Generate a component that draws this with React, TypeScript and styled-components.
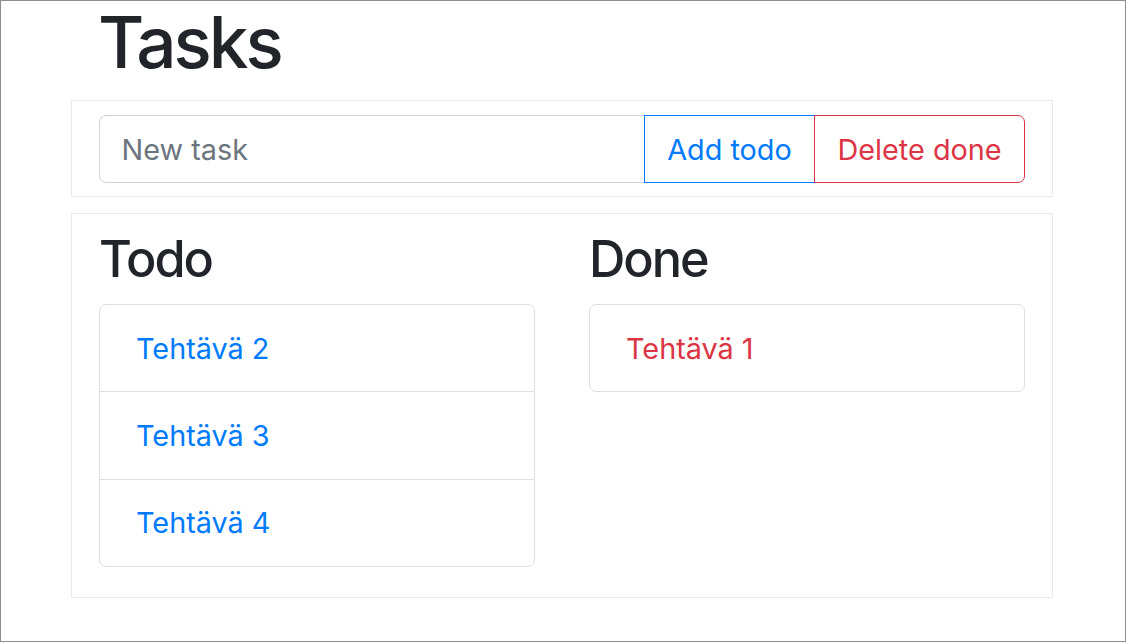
import React from "react";
import styled, { createGlobalStyle } from "styled-components";

const GlobalStyle = createGlobalStyle`
  *, *::before, *::after { box-sizing: border-box; }
  html, body { margin: 0; padding: 0; background: #ffffff; }
  body {
    font-family: Inter, "Noto Sans", "Liberation Sans", sans-serif;
    color: #212529;
  }
`;

const Frame = styled.div`
  width: 1126px;
  height: 642px;
  padding-right: 2px;
  border: 1px solid #8e8e8e;
  overflow: hidden;
`;

const Container = styled.div`
  width: 982px;
  margin: 0 auto;
  display: flex;
  flex-direction: column;
`;

const Title = styled.h1`
  margin: 2px 0 19px;
  padding: 0 27px;
  font-size: 71px;
  font-weight: 500;
  line-height: 1.1;
  letter-spacing: -3px;
`;

const Card = styled.section<{ $pad: string }>`
  border: 1px solid #e9e9ea;
  padding: ${(p) => p.$pad};
  & + & { margin-top: 16px; }
`;

const InputGroup = styled.form`
  display: flex;
  align-items: stretch;
  height: 68px;
`;

const TaskInput = styled.input`
  flex: 1;
  min-width: 0;
  height: 100%;
  border: 1px solid #ced4da;
  border-radius: 7px 0 0 7px;
  padding: 0 21.6px;
  font-family: inherit;
  font-size: 28.8px;
  color: #495057;
  outline: none;
  &::placeholder { color: #6c757d; opacity: 1; }
`;

const OutlineButton = styled.button<{ $color: string; $last?: boolean }>`
  position: relative;
  margin-left: -1px;
  height: 100%;
  padding: 0 22.4px;
  background: #ffffff;
  border: 1px solid ${(p) => p.$color};
  color: ${(p) => p.$color};
  border-radius: ${(p) => (p.$last ? "0 7px 7px 0" : "0")};
  font-family: inherit;
  font-size: 28.8px;
  line-height: 1.5;
  cursor: pointer;
`;

const Columns = styled.div`
  display: grid;
  grid-template-columns: 1fr 1fr;
  column-gap: 54px;
  align-items: start;
`;

const Column = styled.div`
  display: flex;
  flex-direction: column;
`;

const ColumnTitle = styled.h3`
  margin: 0 0 14.4px;
  font-size: 50.4px;
  font-weight: 500;
  line-height: 1.2;
  letter-spacing: -2px;
`;

const List = styled.ul`
  margin: 0;
  padding: 0;
  list-style: none;
  border: 1px solid #dfdfdf;
  border-radius: 7px;
  overflow: hidden;
`;

const Item = styled.li<{ $color: string }>`
  padding: 21.6px 36px;
  font-size: 28.8px;
  line-height: 1.5;
  color: ${(p) => p.$color};
  & + & { border-top: 1px solid #dfdfdf; }
`;

const BLUE = "#007bff";
const RED = "#dc3545";

export default function App() {
  const todo = ["Tehtävä 2", "Tehtävä 3", "Tehtävä 4"];
  const done = ["Tehtävä 1"];
  return (
    <>
      <GlobalStyle />
      <Frame>
        <Container>
          <Title>Tasks</Title>
          <Card $pad="14px 27px 13px">
            <InputGroup onSubmit={(e) => e.preventDefault()}>
              <TaskInput placeholder="New task" />
              <OutlineButton type="button" $color={BLUE}>Add todo</OutlineButton>
              <OutlineButton type="button" $color={RED} $last>Delete done</OutlineButton>
            </InputGroup>
          </Card>
          <Card $pad="15px 27px 30px">
            <Columns>
              <Column>
                <ColumnTitle>Todo</ColumnTitle>
                <List>
                  {todo.map((t) => (
                    <Item key={t} $color={BLUE}>{t}</Item>
                  ))}
                </List>
              </Column>
              <Column>
                <ColumnTitle>Done</ColumnTitle>
                <List>
                  {done.map((t) => (
                    <Item key={t} $color={RED}>{t}</Item>
                  ))}
                </List>
              </Column>
            </Columns>
          </Card>
        </Container>
      </Frame>
    </>
  );
}
